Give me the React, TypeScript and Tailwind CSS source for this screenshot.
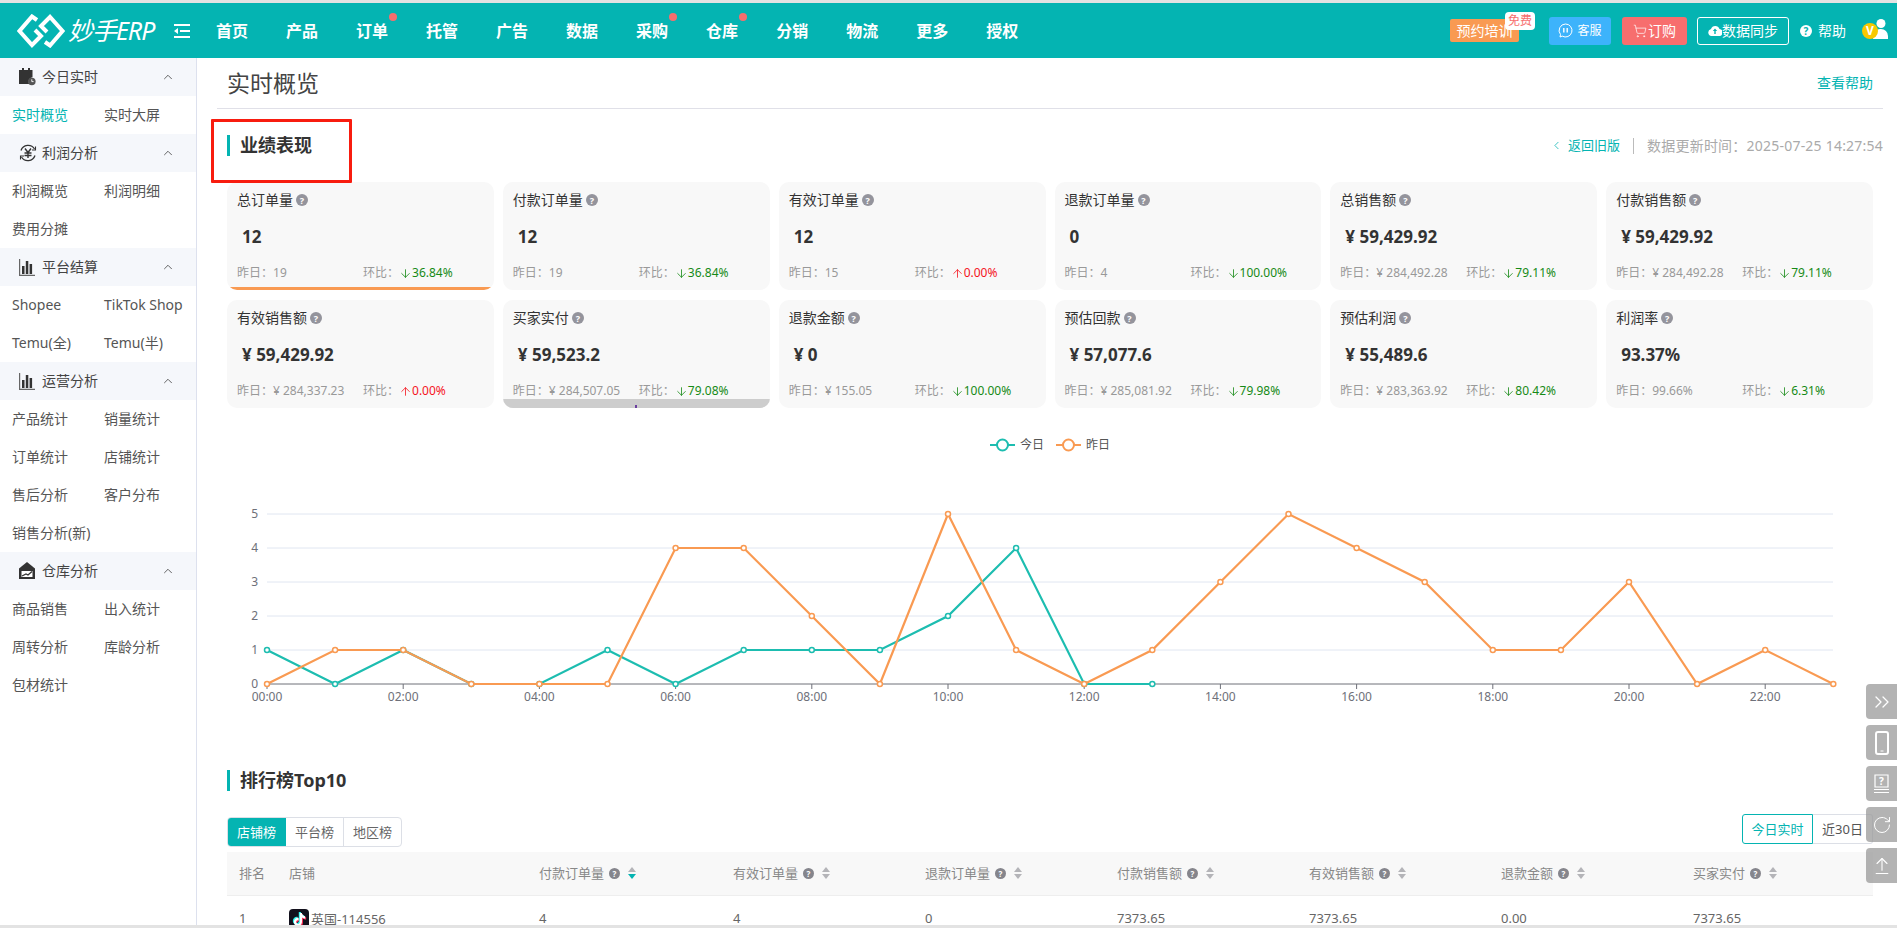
import { ChevronUp, ChevronLeft, ChevronsRight, RotateCw, ArrowUpFromLine, ShoppingCart, ArrowDown, ArrowUp } from 'lucide-react'
import { SiTiktok } from 'react-icons/si'

const navItems = [
  { label: '首页' },
  { label: '产品' },
  { label: '订单', dot: true },
  { label: '托管' },
  { label: '广告' },
  { label: '数据' },
  { label: '采购', dot: true },
  { label: '仓库', dot: true },
  { label: '分销' },
  { label: '物流' },
  { label: '更多' },
  { label: '授权' },
]

const CalendarIcon = () => (
  <svg width="17" height="18" viewBox="0 0 17 18">
    <path d="M3 0h2v2h4V0h2v2h2.500v7.200a4.500 4.500 0 0 0-3.300 6.800H0V2h3z" fill="#333" />
    <circle cx="12.800" cy="13.500" r="3.800" fill="#555" />
    <path d="M12.800 11.300v2.300h1.800" stroke="#fff" strokeWidth="0.9" fill="none" />
  </svg>
)

const YenIcon = () => (
  <svg width="18" height="18" viewBox="0 0 18 18" fill="none">
    <path d="M2 6.500A7.500 7.500 0 0 1 15.500 5M16 11.500A7.500 7.500 0 0 1 2.500 13" stroke="#333" strokeWidth="1.300" />
    <path d="M16.500 2.500v3.500H13M1.500 15.500v-3.500H5" stroke="#333" strokeWidth="1.100" />
    <path d="M6 4.500l3 4 3-4M5.500 9h7M5.500 11.500h7M9 8.500V14" stroke="#333" strokeWidth="1.400" />
  </svg>
)

const BarsIcon = () => (
  <svg width="16" height="18" viewBox="0 0 16 18">
    <path d="M0 1h1.200v15.800H16V18H0z" fill="#666" />
    <path d="M3 8h2.500v8H3zM6.800 3h2.500v13H6.800zM10.600 6h2.500v10h-2.500z" fill="#333" />
  </svg>
)

const StoreIcon = () => (
  <svg width="16" height="18" viewBox="0 0 16 18">
    <path d="M8 0l8 6.500V17H0V6.500z" fill="#333" />
    <path d="M2.500 9h11v6h-11z" fill="#fff" />
    <path d="M3 14l4-2 2 1 4-3.500" stroke="#333" strokeWidth="1.300" fill="none" />
  </svg>
)

const sideGroups = [
  { title: '今日实时', icon: <CalendarIcon />, items: ['实时概览', '实时大屏'] },
  { title: '利润分析', icon: <YenIcon />, items: ['利润概览', '利润明细', '费用分摊'] },
  { title: '平台结算', icon: <BarsIcon />, items: ['Shopee', 'TikTok Shop', 'Temu(全)', 'Temu(半)'] },
  { title: '运营分析', icon: <BarsIcon />, items: ['产品统计', '销量统计', '订单统计', '店铺统计', '售后分析', '客户分布', '销售分析(新)'] },
  { title: '仓库分析', icon: <StoreIcon />, items: ['商品销售', '出入统计', '周转分析', '库龄分析', '包材统计'] },
]

const cards = [
  { title: '总订单量', value: '12', prev: '19', rate: '36.84%', up: false, bar: 'orange' },
  { title: '付款订单量', value: '12', prev: '19', rate: '36.84%', up: false },
  { title: '有效订单量', value: '12', prev: '15', rate: '0.00%', up: true },
  { title: '退款订单量', value: '0', prev: '4', rate: '100.00%', up: false },
  { title: '总销售额', value: '¥ 59,429.92', prev: '¥ 284,492.28', rate: '79.11%', up: false },
  { title: '付款销售额', value: '¥ 59,429.92', prev: '¥ 284,492.28', rate: '79.11%', up: false },
  { title: '有效销售额', value: '¥ 59,429.92', prev: '¥ 284,337.23', rate: '0.00%', up: true },
  { title: '买家实付', value: '¥ 59,523.2', prev: '¥ 284,507.05', rate: '79.08%', up: false, bar: 'gray' },
  { title: '退款金额', value: '¥ 0', prev: '¥ 155.05', rate: '100.00%', up: false },
  { title: '预估回款', value: '¥ 57,077.6', prev: '¥ 285,081.92', rate: '79.98%', up: false },
  { title: '预估利润', value: '¥ 55,489.6', prev: '¥ 283,363.92', rate: '80.42%', up: false },
  { title: '利润率', value: '93.37%', prev: '99.66%', rate: '6.31%', up: false },
]

const today = [1, 0, 1, 0, 0, 1, 0, 1, 1, 1, 2, 4, 0, 0]
const yesterday = [0, 1, 1, 0, 0, 0, 4, 4, 2, 0, 5, 1, 0, 1, 3, 5, 4, 3, 1, 1, 3, 0, 1, 0]

const px = (h: number) => 267 + 68.1 * h
const py = (v: number) => 684 - 34 * v
const linePoints = (data: number[]) => data.map((v, i) => `${px(i)},${py(v)}`).join(' ')

const tableCols = [
  { label: '付款订单量', value: '4', active: true },
  { label: '有效订单量', value: '4' },
  { label: '退款订单量', value: '0' },
  { label: '付款销售额', value: '7373.65' },
  { label: '有效销售额', value: '7373.65' },
  { label: '退款金额', value: '0.00' },
  { label: '买家实付', value: '7373.65' },
]

function Help({ size = 'big' }: { size?: string }) {
  return (
    <span
      className={
        size === 'big'
          ? 'inline-flex h-[12px] w-[12px] items-center justify-center rounded-full bg-[#94949c] text-[9px] font-bold leading-none text-white'
          : 'inline-flex h-[11px] w-[11px] items-center justify-center rounded-full bg-[#85858c] text-[8px] font-bold leading-none text-white'
      }
    >
      ?
    </span>
  )
}

function Caret({ active }: { active?: boolean }) {
  return (
    <svg width="10" height="13" viewBox="0 0 10 13">
      <path d="M5 0l4 5H1z" fill="#b4b4b8" />
      <path d="M5 12l4-5H1z" fill={active ? '#04b4b2' : '#b4b4b8'} />
    </svg>
  )
}

function SectionTitle({ text }: { text: string }) {
  return (
    <div className="flex h-[21px] items-center border-l-[3px] border-[#04b4b2] pl-[10px]">
      <span className="text-[18px] font-bold leading-[21px] text-[#333]">{text}</span>
    </div>
  )
}

export default function App() {
  return (
    <div className="relative flex h-[928px] w-[1897px] flex-col overflow-hidden bg-white font-['Noto_Sans','Noto_Sans_CJK_SC',sans-serif] text-[14px] text-[#333]">
      <div className="h-[3px] shrink-0 bg-[#e3e3e3]" />

      <header className="flex h-[55px] shrink-0 items-center bg-[#04b4b2] text-white">
        <div className="flex w-[174px] items-center pl-[17px]">
          <svg width="48" height="34" viewBox="0 0 48 34" fill="none" stroke="#fff" strokeWidth="4" strokeLinejoin="miter">
            <path d="M20 6L15 2.500 2.500 17 15 31l9-9-6-6" />
            <path d="M28 28l5 3.500L45.500 17 33 3l-9 9 6 6" />
          </svg>
          <span className="ml-[3px] whitespace-nowrap text-[25px] italic leading-none tracking-[-1px]">妙手ERP</span>
        </div>
        <div className="flex w-[42px] items-center">
          <svg width="16" height="14" viewBox="0 0 16 14" fill="#fff">
            <path d="M0 0h16v2H0zM6 6h10v2H6zM0 12h16v2H0zM0 7l4-3v6z" />
          </svg>
        </div>
        <nav className="flex items-center gap-[38px]">
          {navItems.map(item => (
            <span key={item.label} className="relative text-[16px] font-semibold leading-[24px]">
              {item.label}
              {item.dot && <span className="absolute right-[-9px] top-[-6px] h-[8px] w-[8px] rounded-full bg-[#f76e6e]" />}
            </span>
          ))}
        </nav>
        <div className="ml-auto flex items-center pr-[9px]">
          <div className="relative flex h-[23px] w-[69px] items-center justify-center rounded-[2px] bg-[#f99a52] text-[14px] leading-none">
            预约培训
            <span className="absolute right-[-16px] top-[-7px] flex h-[18px] w-[30px] items-center justify-center rounded-[4px] bg-white text-[12px] text-[#f76e6e]">免费</span>
          </div>
          <div className="ml-[30px] flex h-[28px] w-[62px] items-center justify-center gap-[4px] rounded-[3px] bg-[#3db3fb] text-[12px]">
            <svg width="15" height="15" viewBox="0 0 15 15" fill="none" stroke="#fff" strokeWidth="1">
              <path d="M7.500 1a6.500 6.500 0 1 1-3.300 12.100L2 14l.5-2.500A6.500 6.500 0 0 1 7.500 1z" />
              <path d="M5.800 5v4.500M9.200 5v4.500" strokeWidth="1.400" />
            </svg>
            客服
          </div>
          <div className="ml-[11px] flex h-[28px] w-[65px] items-center justify-center gap-[1px] rounded-[3px] bg-[#f76e6e] text-[14px]">
            <ShoppingCart size={14} strokeWidth={1.200} />
            订购
          </div>
          <div className="ml-[10px] flex h-[28px] w-[92px] items-center justify-center rounded-[3px] border border-white text-[14px]">
            <svg width="14" height="11" viewBox="0 0 14 11">
              <path d="M3.500 11a3.500 3.500 0 0 1-.5-6.900A4.500 4.500 0 0 1 11.500 4 3.500 3.500 0 0 1 10.500 11z" fill="#fff" />
              <path d="M7 3.500L4.800 6H6.300v3h1.400V6h1.500z" fill="#04b4b2" />
            </svg>
            数据同步
          </div>
          <span className="ml-[11px] flex h-[12px] w-[12px] items-center justify-center rounded-full bg-white text-[10px] font-bold leading-none text-[#04b4b2]">?</span>
          <span className="ml-[6px] text-[14px] leading-none">帮助</span>
          <div className="relative ml-[26px] h-[22px] w-[16px]">
            <svg width="16" height="21" viewBox="0 0 16 21" fill="#fff" className="absolute right-0 top-[-2px]">
              <circle cx="9" cy="5.500" r="4.500" />
              <path d="M1 21v-3a7 7 0 0 1 7-7h1a7 7 0 0 1 7 7v3z" />
            </svg>
            <span className="absolute left-[-10px] top-[3px] flex h-[16px] w-[16px] items-center justify-center rounded-full bg-[#f8c800] text-[12px] font-bold leading-none text-white">V</span>
          </div>
        </div>
      </header>

      <div className="flex min-h-0 flex-1">
        <aside className="w-[197px] shrink-0 border-r border-[#dde1ee]">
          {sideGroups.map(group => (
            <div key={group.title}>
              <div className="flex h-[38px] items-center bg-[#f5f7fb] pl-[19px] pr-[21px]">
                <span className="flex w-[23px] items-center">{group.icon}</span>
                <span className="leading-none text-[#444]">{group.title}</span>
                <ChevronUp size={14} strokeWidth={1.400} className="ml-auto text-[#444]" />
              </div>
              <div className="grid grid-cols-[92px_1fr] pl-[12px]">
                {group.items.map(item => (
                  <span
                    key={item}
                    className={
                      item === '实时概览'
                        ? 'whitespace-nowrap text-[14px] leading-[38px] text-[#04b4b2]'
                        : 'whitespace-nowrap text-[14px] leading-[38px] text-[#555]'
                    }
                  >
                    {item}
                  </span>
                ))}
              </div>
            </div>
          ))}
        </aside>

        <main className="min-w-0 flex-1 overflow-hidden pl-[30px] pr-[24px]">
          <div className="-mx-[10px] flex h-[51px] items-center justify-between border-b border-[#e0e0e8] px-[10px] pb-px">
            <h1 className="text-[23px] font-normal leading-[30px] text-[#444]">实时概览</h1>
            <a className="text-[14px] leading-[20px] text-[#04b4b2]">查看帮助</a>
          </div>

          <div className="mt-[26px] flex h-[21px] items-center justify-between">
            <SectionTitle text="业绩表现" />
            <div className="-mr-[10px] flex items-center text-[13px] leading-none">
              <ChevronLeft size={13} strokeWidth={1.400} className="text-[#04b4b2]" />
              <span className="ml-[5px] text-[#04b4b2]">返回旧版</span>
              <span className="mx-[13px] h-[16px] w-px bg-[#bbb]" />
              <span className="text-[14px] tracking-[0.22px] text-[#aaa]">数据更新时间：2025-07-25 14:27:54</span>
            </div>
          </div>

          <div className="mt-[26px] grid grid-cols-6 gap-x-[9px] gap-y-[10px]">
            {cards.map(card => (
              <div key={card.title} className="relative h-[108px] overflow-hidden rounded-[10px] bg-[#f8f8f8] px-[10px] pt-[8px]">
                <div className="flex h-[20px] items-center gap-[3px] text-[14px] leading-[20px] text-[#333]">
                  {card.title}
                  <Help />
                </div>
                <div className="mt-[17px] h-[20px] pl-[5px] text-[17px] font-bold leading-[20px] text-[#333]">{card.value}</div>
                <div className="mt-[16px] flex h-[20px] items-center text-[12px] leading-[20px] text-[#999]">
                  <span className="w-[126px] shrink-0 whitespace-nowrap">昨日：{card.prev}</span>
                  <span className="whitespace-nowrap">环比：</span>
                  <span className={card.up ? 'flex items-center whitespace-nowrap text-[#f5141e]' : 'flex items-center whitespace-nowrap text-[#168a16]'}>
                    {card.up ? <ArrowUp size={13} strokeWidth={1.500} /> : <ArrowDown size={13} strokeWidth={1.500} />}
                    {card.rate}
                  </span>
                </div>
                {card.bar === 'orange' && <div className="absolute inset-x-0 bottom-0 h-[3px] bg-[#f99a52]" />}
                {card.bar === 'gray' && (
                  <div className="absolute inset-x-0 bottom-0 h-[9px] bg-[#cdcdcd]">
                    <span className="absolute bottom-0 left-[132px] h-[3px] w-[2px] bg-[#6b3fa0]" />
                  </div>
                )}
              </div>
            ))}
          </div>

          <div className="mt-[30px] flex h-[14px] items-center justify-center text-[12px] leading-none text-[#555]">
            <svg width="25" height="14" viewBox="0 0 25 14" className="mr-[5px]">
              <path d="M0 7h25" stroke="#1dbdb0" strokeWidth="2" />
              <circle cx="12.500" cy="7" r="5.500" fill="#fff" stroke="#1dbdb0" strokeWidth="2" />
            </svg>
            今日
            <svg width="25" height="14" viewBox="0 0 25 14" className="ml-[12px] mr-[5px]">
              <path d="M0 7h25" stroke="#f99a52" strokeWidth="2" />
              <circle cx="12.500" cy="7" r="5.500" fill="#fff" stroke="#f99a52" strokeWidth="2" />
            </svg>
            昨日
          </div>

          <svg width="1646" height="318" viewBox="227 452 1646 318" className="block">
            {[1, 2, 3, 4, 5].map(v => (
              <line key={v} x1={267} x2={1833} y1={py(v)} y2={py(v)} stroke="#e0e6f1" />
            ))}
            <line x1={267} x2={1833} y1={684} y2={684} stroke="#6e7079" />
            {[0, 1, 2, 3, 4, 5].map(v => (
              <text key={v} x={258} y={py(v) + 4} textAnchor="end" fontSize="12" fill="#6e7079">{v}</text>
            ))}
            {Array.from({ length: 12 }, (_, i) => i * 2).map(h => (
              <g key={h}>
                <line x1={px(h)} x2={px(h)} y1={684} y2={689} stroke="#6e7079" />
                <text x={px(h)} y={701} textAnchor="middle" fontSize="12" fill="#6e7079">
                  {String(h).padStart(2, '0')}:00
                </text>
              </g>
            ))}
            <polyline points={linePoints(today)} fill="none" stroke="#1dbdb0" strokeWidth="2.200" />
            {today.map((v, i) => (
              <circle key={i} cx={px(i)} cy={py(v)} r="2.500" fill="#fff" stroke="#1dbdb0" strokeWidth="1.500" />
            ))}
            <polyline points={linePoints(yesterday)} fill="none" stroke="#f99a52" strokeWidth="2.200" />
            {yesterday.map((v, i) => (
              <circle key={i} cx={px(i)} cy={py(v)} r="2.500" fill="#fff" stroke="#f99a52" strokeWidth="1.500" />
            ))}
          </svg>

          <SectionTitle text="排行榜Top10" />

          <div className="mt-[23px] flex h-[33px] items-start justify-between">
            <div className="mt-[3px] flex h-[30px] overflow-hidden rounded-[4px] border border-[#dcdfe6] text-[13px] leading-none text-[#666]">
              <span className="-my-px -ml-px flex w-[59px] items-center justify-center bg-[#04b4b2] text-white">店铺榜</span>
              <span className="flex w-[58px] items-center justify-center border-r border-[#dcdfe6]">平台榜</span>
              <span className="flex w-[57px] items-center justify-center">地区榜</span>
            </div>
            <div className="flex h-[30px] text-[13px] leading-none">
              <span className="flex w-[71px] items-center justify-center rounded-l-[3px] border border-[#04b4b2] text-[#04b4b2]">今日实时</span>
              <span className="flex w-[60px] items-center justify-center rounded-r-[3px] border border-l-0 border-[#dcdfe6] text-[#555]">近30日</span>
            </div>
          </div>

          <div className="mt-[5px] grid h-[44px] grid-cols-[50px_250px_194px_192px_192px_192px_192px_192px_1fr] items-center border-b border-[#eee] bg-[#f8f8f8] pl-[12px] text-[13px] leading-none text-[#888]">
            <span>排名</span>
            <span>店铺</span>
            {tableCols.map(col => (
              <span key={col.label} className="flex items-center">
                {col.label}
                <span className="ml-[5px] flex"><Help size="small" /></span>
                <span className="ml-[7px] flex"><Caret active={col.active} /></span>
              </span>
            ))}
          </div>

          <div className="grid grid-cols-[50px_250px_194px_192px_192px_192px_192px_192px_1fr] items-start pl-[12px] pt-[13px] text-[13px] leading-[18px] text-[#666]">
            <span>1</span>
            <span className="flex items-center">
              <span className="flex h-[20px] w-[20px] items-center justify-center rounded-[4px] bg-[#12101c]">
                <SiTiktok size={13} color="#fff" className="[filter:drop-shadow(-1px_-1px_0_#25f4ee)_drop-shadow(1px_1px_0_#fe2c55)]" />
              </span>
              <span className="ml-[2px]">英国-114556</span>
            </span>
            {tableCols.map(col => (
              <span key={col.label}>{col.value}</span>
            ))}
          </div>
        </main>
      </div>

      <div className="h-[3px] shrink-0 bg-[#e3e3e3]" />

      {/* annotation drawn over the screenshot */}
      <div className="absolute left-[211px] top-[119px] h-[64px] w-[141px] rounded-[1px] border-[3px] border-[#f81c0f]" />

      <div className="absolute right-0 top-[684px] flex w-[31px] flex-col gap-[6px] text-white">
        {[
          <ChevronsRight size={24} strokeWidth={1.300} />,
          <svg width="14" height="24" viewBox="0 0 14 24" fill="none" stroke="#fff" strokeWidth="2">
            <rect x="1" y="1" width="12" height="22" rx="2" />
            <path d="M5.500 20h3" strokeWidth="1" />
          </svg>,
          <svg width="17" height="20" viewBox="0 0 17 20" fill="none" stroke="#fff" strokeWidth="1.200">
            <path d="M2 1h13v12H2zM1 15.500h15M1 18.500h15" />
            <text x="8.500" y="11" textAnchor="middle" fontSize="10" fontWeight="700" fill="#fff" stroke="none">?</text>
          </svg>,
          <RotateCw size={20} strokeWidth={1.200} />,
          <ArrowUpFromLine size={20} strokeWidth={1.300} />,
        ].map((icon, i) => (
          <div key={i} className="flex h-[35px] items-center justify-center rounded-l-[4px] bg-[#999]/75">
            {icon}
          </div>
        ))}
      </div>
    </div>
  )
}
